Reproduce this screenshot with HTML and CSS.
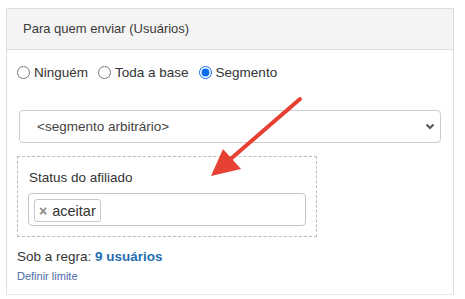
FILE: index.html
```html
<!doctype html>
<html lang="pt">
  <head>
    <meta charset="UTF-8" />
    <title>Para quem enviar</title>
    <link rel="stylesheet" href="styles.css">
  </head>
  <body>
    <div class="panel">
      <div class="panel-heading">Para quem enviar (Usuários)</div>

      <div class="panel-body">
        <div class="radio-row">
          <label class="radio"><input type="radio" name="target"> Ninguém</label>
          <label class="radio"><input type="radio" name="target"> Toda a base</label>
          <label class="radio"><input type="radio" name="target" checked> Segmento</label>
        </div>

        <div class="select-wrap">
          <select class="segment-select">
            <option>&lt;segmento arbitrário&gt;</option>
          </select>
          <svg class="chevron" width="10" height="7" viewBox="0 0 10 7">
            <polyline points="1.5,1.5 5,5 8.5,1.5" fill="none" stroke="#555" stroke-width="2" />
          </svg>
        </div>

        <div class="rule-box">
          <div class="rule-label">Status do afiliado</div>
          <div class="tag-input">
            <span class="tag"><span class="tag-remove">×</span> aceitar</span>
          </div>
        </div>

        <div class="summary">Sob a regra: <strong>9 usuários</strong></div>
        <a class="limit-link" href="#">Definir limite</a>
      </div>
    </div>

    <!-- annotation arrow -->
    <svg class="arrow" width="465" height="299" viewBox="0 0 465 299">
      <line x1="300" y1="99" x2="226" y2="163" stroke="#e64132" stroke-width="4" stroke-linecap="round" />
      <polygon points="211,176 223,149 241,169" fill="#e64132" />
    </svg>
  </body>
</html>
```

FILE: styles.css
```css
* {
  margin: 0;
  padding: 0;
  box-sizing: border-box;
}

body {
  font-family: "Liberation Sans", Arial, sans-serif;
  color: #333;
  background: white;
  padding: 8px 0 0 6px;
  position: relative;
}

.panel {
  width: 448px;
  height: 287px;
  border: 1px solid #ddd;
  border-bottom-color: #eaeaea;
}

.panel-heading {
  height: 41px;
  line-height: 40px;
  padding: 0 16px;
  background: #f4f4f4;
  border-bottom: 1px solid #ddd;
  font-size: 13px;
  color: #3a3a3a;
}

.panel-body {
  padding: 12px 10px 0 10px;
}

.radio-row {
  display: flex;
  gap: 10px;
  height: 20px;
  align-items: center;
  font-size: 13.5px;
}

.radio {
  display: flex;
  align-items: center;
  gap: 4px;
}

.radio input {
  width: 13px;
  height: 13px;
  margin: 0;
  accent-color: #0a6cf0;
}

.select-wrap {
  position: relative;
  margin: 28px 0 0 2px;
  width: 422px;
}

.segment-select {
  appearance: none;
  width: 100%;
  height: 33px;
  border: 1px solid #ccc;
  border-radius: 4px;
  background: white;
  padding: 0 17px;
  font-family: inherit;
  font-size: 13.5px;
  color: #444;
}

.chevron {
  position: absolute;
  right: 6px;
  top: 13px;
}

.rule-box {
  margin-top: 13px;
  width: 300px;
  height: 81px;
  border: 1px dashed #bbb;
  padding: 11px 10px 0 10px;
}

.rule-label {
  font-size: 13.5px;
  line-height: 20px;
  padding-left: 1px;
}

.tag-input {
  margin-top: 5px;
  height: 33px;
  width: 278px;
  border: 1px solid #c4c4c4;
  border-radius: 4px;
  padding: 5px 0 0 5px;
}

.tag {
  display: inline-flex;
  align-items: center;
  gap: 5px;
  height: 23px;
  padding: 0 4px 0 4px;
  border: 1px solid #c8c8c8;
  border-radius: 3px;
  font-size: 14.5px;
  color: #333;
}

.tag-remove {
  font-size: 14px;
  font-weight: bold;
  color: #888;
}

.summary {
  margin-top: 10px;
  font-size: 13.5px;
  line-height: 20px;
}

.summary strong {
  color: #1f6eb3;
}

.limit-link {
  display: block;
  margin-top: 1px;
  font-size: 11px;
  line-height: 16px;
  color: #4b6aa8;
  text-decoration: none;
}

.arrow {
  position: absolute;
  left: 0;
  top: 0;
  pointer-events: none;
}
```
